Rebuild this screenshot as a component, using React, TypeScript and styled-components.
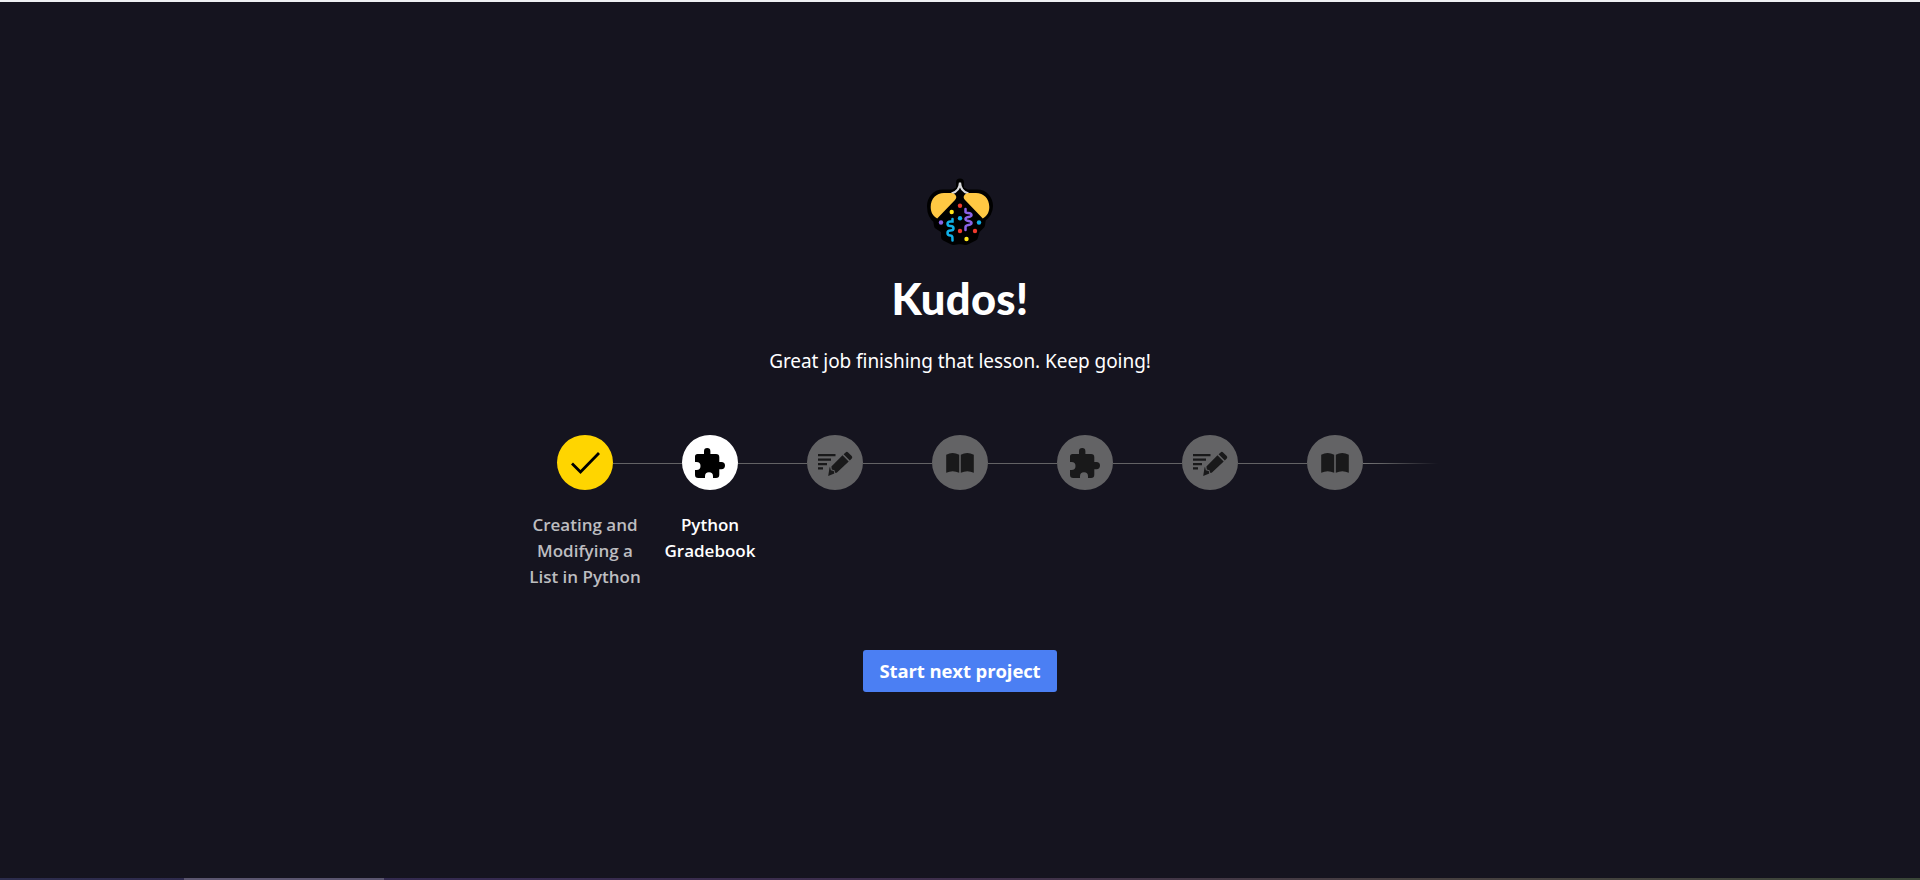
import React from 'react';
import styled, { createGlobalStyle } from 'styled-components';

const Global = createGlobalStyle`
  * { box-sizing: border-box; }
  body { margin: 0; background: #15141f; font-family: Lato, "Open Sans", sans-serif; overflow: hidden; }
`;
const Page = styled.main`
  height: 880px;
  display: flex;
  flex-direction: column;
  align-items: center;
  background: #15141f;
  border-top: 2px solid #eef0f2;
  color: #fff;
`;
const Logo = styled.svg`
  width: 90px;
  height: 84px;
  margin-top: 166px;
  flex: none;
`;
const Title = styled.h1`
  margin: 16px 0 0;
  font-size: 43.5px;
  line-height: 60px;
  font-weight: 900;
  letter-spacing: 0.3px;
  white-space: nowrap;
`;
const Message = styled.p`
  margin: 19px 0 0;
  font: 400 19px/28px "Noto Sans", sans-serif;
  letter-spacing: -0.06px;
  white-space: nowrap;
`;
const Steps = styled.ol`
  list-style: none;
  display: grid;
  grid-template-columns: repeat(7, 125px);
  margin: 60px 0 0;
  padding: 0;
  height: 160px;
`;
const Step = styled.li`
  display: flex;
  flex-direction: column;
  align-items: center;
`;
const Rail = styled.div<{ $first?: boolean; $last?: boolean }>`
  display: flex;
  align-items: center;
  align-self: stretch;
  margin-right: ${p => (p.$last ? '-40px' : 0)};
  &::before, &::after { content: ''; height: 1px; margin-top: 2px; background: #636365; }
  &::before { width: 34.5px; visibility: ${p => (p.$first ? 'hidden' : 'visible')}; }
  &::after { flex: 1; ${p => p.$last && 'background: linear-gradient(90deg, #737375, #636365 25%, #15141f);'} }
`;
const Disc = styled.span<{ $fill: string }>`
  width: 56px;
  height: 55px;
  flex: none;
  border-radius: 50%;
  background: ${p => p.$fill};
  svg { display: block; }
`;
const Label = styled.span<{ $dim?: boolean }>`
  margin-top: 22px;
  font: 600 17px/26px "Open Sans", sans-serif;
  color: ${p => (p.$dim ? '#bdbdc0' : '#fff')};
`;
const Line = styled.span`
  display: block;
  text-align: center;
  white-space: nowrap;
`;
const Button = styled.button`
  width: 194px;
  height: 42px;
  margin-top: 55px;
  padding: 0;
  border: 0;
  border-radius: 3px;
  background: #4b7ff3;
  color: #fff;
  font: 700 18.5px/40px "Open Sans", sans-serif;
  letter-spacing: -0.1px;
  white-space: nowrap;
`;
const Taskbar = styled.footer`
  width: 100%;
  height: 2px;
  margin-top: auto;
  padding-left: 184px;
  background: linear-gradient(90deg, #2b2c4c, #352a50 25%, #3f2f4c 50%, #474040 75%, #3a4638);
`;
const ActiveApp = styled.div`
  width: 200px;
  height: 2px;
  background: #5b5670;
`;

type Kind = 'check' | 'puzzle' | 'write' | 'book';

function Icon({ kind, color }: { kind: Kind; color: string }) {
  return (
    <svg width="56" height="55" viewBox="0 0 56 55" fill={color}>
      {kind === 'check' && <path d="M15 28.5l8.5 8.5L42 18" fill="none" stroke={color} strokeWidth="2.8" />}
      {kind === 'puzzle' && (
        <path d="M15.5 19h6.500V16.300a3.200 3.200 0 0 1 6.400 0V19H34a3.300 3.300 0 0 1 3.300 3.300V27H39.400a3.600 3.600 0 0 1 0 7.200H37.300V39.700a3.300 3.300 0 0 1-3.300 3.300H31v-1.700a4 4 0 0 0-8 0V43H16.300A3.300 3.300 0 0 1 13 39.700V35h1.500a4 4 0 0 0 0-8H13V21.500A2.500 2.500 0 0 1 15.500 19z" />
      )}
      {kind === 'write' && (
        <g>
          <path d="M11 19h17.500v2.200H11zM11 23.500h13v2.200H11zM11 28h9v2.200H11zM11 32.200h5v2.200H11z" />
          <path d="M35.500 20.200l6.200 6.200-12 11.400-1.700-.1-.5-2.500-2.700-.6-.4-3zM23 31.800l.8 3.500 3 .8.5 2.500L21.200 41l1.300-8.300zM36.600 19.200l2-1.800q1.300-1.100 2.500.1l3.600 3.600q1.200 1.200.1 2.500l-2 1.800z" />
        </g>
      )}
      {kind === 'book' && (
        <path d="M14.200 19.800q6.300-3.600 13 0V37.800q-6.500-3.100-13 0zM28.800 19.800q6.400-3.600 13 0V37.800q-6.500-3.100-13 0z" />
      )}
    </svg>
  );
}

const steps: { kind: Kind; fill: string; ink: string; lines?: string[]; dim?: boolean }[] = [
  { kind: 'check', fill: '#ffd500', ink: '#000', lines: ['Creating and', 'Modifying a', 'List in Python'], dim: true },
  { kind: 'puzzle', fill: '#fff', ink: '#000', lines: ['Python', 'Gradebook'] },
  { kind: 'write', fill: '#636365', ink: '#19191a' },
  { kind: 'book', fill: '#636365', ink: '#19191a' },
  { kind: 'puzzle', fill: '#636365', ink: '#19191a' },
  { kind: 'write', fill: '#636365', ink: '#19191a' },
  { kind: 'book', fill: '#636365', ink: '#19191a' },
];

const dots: [number, number, string][] = [
  [45, 37.700, '#f03a2e'], [36.700, 44, '#ffe81a'], [45, 50.300, '#10b0e8'], [26, 54.500, '#8a63e6'],
  [64, 54.500, '#10b0e8'], [45, 63, '#f03a2e'], [60, 63, '#f03a2e'], [51.500, 71, '#ffe81a'],
];

function Bee() {
  return (
    <Logo viewBox="0 0 90 84">
      <path d="M45 14.500V22L38 25.500H28C20 25.500 16 32 16 38c0 6 2 11 6 13.500l1 6 7 4.500v7l8 4 7-1 6 1 8-4 2-7 5-5 1-6.500c4-3 7-7 7-12.500 0-6-4-12.500-12-12.500H52L45 22z" fill="#000" stroke="#000" strokeWidth="8" strokeLinejoin="round" strokeLinecap="round" />
      <path d="M36.500 25.500Q44.500 23.500 45 14.500 45.500 23.500 53.500 25.500" fill="none" stroke="#d9dadd" strokeWidth="2.200" />
      <path d="M22.200 50.500C17 47.500 15.700 43 15.700 39 15.700 30.500 21.500 25 29 25H36C40.500 25 43 29 40 32zM67.800 50.500C73 47.500 74.300 43 74.300 39 74.300 30.500 68.500 25 61 25H54C49.500 25 47 29 50 32z" fill="#ffc843" />
      <path d="M37.500 51v2.500h-2c-4 0-4 4.500 0 4.500 4 0 4 4.500 0 4.500-4 0-4 5 0 5 2 0 2 1.500 2 5" fill="none" stroke="#10b0e8" strokeWidth="2.500" strokeLinecap="round" />
      <path d="M50.500 41v3c0 2 6 0 6 3s-6 1-6 4 6 1 6 4-6 1-6 4v3" fill="none" stroke="#8a63e6" strokeWidth="2.500" strokeLinecap="round" />
      {dots.map(([x, y, c]) => <circle key={`${x}-${y}`} cx={x} cy={y} r="2.200" fill={c} />)}
    </Logo>
  );
}

export default function App() {
  return (
    <>
      <Global />
      <Page>
        <Bee />
        <Title>Kudos!</Title>
        <Message>Great job finishing that lesson. Keep going!</Message>
        <Steps>
          {steps.map((s, i) => (
            <Step key={i}>
              <Rail $first={i === 0} $last={i === steps.length - 1}>
                <Disc $fill={s.fill}><Icon kind={s.kind} color={s.ink} /></Disc>
              </Rail>
              {s.lines && <Label $dim={s.dim}>{s.lines.map(l => <Line key={l}>{l}</Line>)}</Label>}
            </Step>
          ))}
        </Steps>
        <Button>Start next project</Button>
        <Taskbar><ActiveApp /></Taskbar>
      </Page>
    </>
  );
}
